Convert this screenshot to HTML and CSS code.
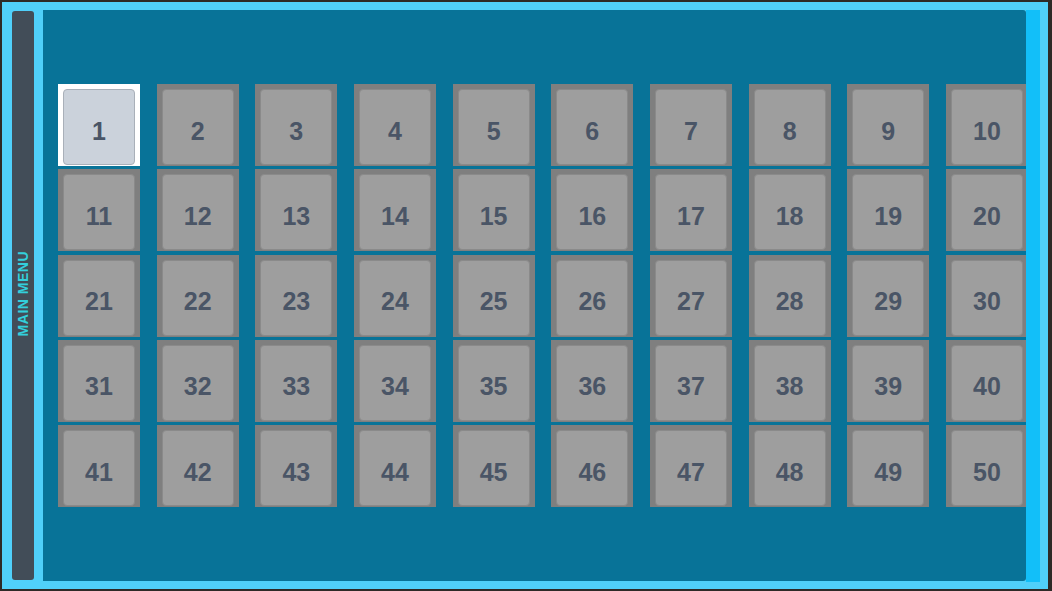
FILE: index.html
```html
<!DOCTYPE html>
<html>
<head>
<meta charset="utf-8">
<link rel="stylesheet" href="styles.css">
</head>
<body>
<div class="window">
  <div class="frame">
    <aside class="sidebar"><span class="sidebar-label">MAIN MENU</span></aside>
    <main class="panel">
      <div class="grid">
        <div class="tile selected"><div class="face">1</div></div>
        <div class="tile"><div class="face">2</div></div>
        <div class="tile"><div class="face">3</div></div>
        <div class="tile"><div class="face">4</div></div>
        <div class="tile"><div class="face">5</div></div>
        <div class="tile"><div class="face">6</div></div>
        <div class="tile"><div class="face">7</div></div>
        <div class="tile"><div class="face">8</div></div>
        <div class="tile"><div class="face">9</div></div>
        <div class="tile"><div class="face">10</div></div>
        <div class="tile"><div class="face">11</div></div>
        <div class="tile"><div class="face">12</div></div>
        <div class="tile"><div class="face">13</div></div>
        <div class="tile"><div class="face">14</div></div>
        <div class="tile"><div class="face">15</div></div>
        <div class="tile"><div class="face">16</div></div>
        <div class="tile"><div class="face">17</div></div>
        <div class="tile"><div class="face">18</div></div>
        <div class="tile"><div class="face">19</div></div>
        <div class="tile"><div class="face">20</div></div>
        <div class="tile"><div class="face">21</div></div>
        <div class="tile"><div class="face">22</div></div>
        <div class="tile"><div class="face">23</div></div>
        <div class="tile"><div class="face">24</div></div>
        <div class="tile"><div class="face">25</div></div>
        <div class="tile"><div class="face">26</div></div>
        <div class="tile"><div class="face">27</div></div>
        <div class="tile"><div class="face">28</div></div>
        <div class="tile"><div class="face">29</div></div>
        <div class="tile"><div class="face">30</div></div>
        <div class="tile"><div class="face">31</div></div>
        <div class="tile"><div class="face">32</div></div>
        <div class="tile"><div class="face">33</div></div>
        <div class="tile"><div class="face">34</div></div>
        <div class="tile"><div class="face">35</div></div>
        <div class="tile"><div class="face">36</div></div>
        <div class="tile"><div class="face">37</div></div>
        <div class="tile"><div class="face">38</div></div>
        <div class="tile"><div class="face">39</div></div>
        <div class="tile"><div class="face">40</div></div>
        <div class="tile"><div class="face">41</div></div>
        <div class="tile"><div class="face">42</div></div>
        <div class="tile"><div class="face">43</div></div>
        <div class="tile"><div class="face">44</div></div>
        <div class="tile"><div class="face">45</div></div>
        <div class="tile"><div class="face">46</div></div>
        <div class="tile"><div class="face">47</div></div>
        <div class="tile"><div class="face">48</div></div>
        <div class="tile"><div class="face">49</div></div>
        <div class="tile"><div class="face">50</div></div>
      </div>
    </main>
    <div class="scroll-strip"></div>
  </div>
</div>
</body>
</html>
```

FILE: styles.css
```css
* { box-sizing: border-box; }
html, body {
  margin: 0;
  padding: 0;
  background: #2e2a27;
  overflow: hidden;
}
.window {
  width: 1052px;
  height: 591px;
  padding: 2px 4px 2px 2px;
  background: #2e2a27;
  font-family: "Liberation Sans", Arial, sans-serif;
}
.frame {
  width: 100%;
  height: 100%;
  background: #50d0fa;
  display: flex;
  padding: 8px 8px 8px 10px;
}
.sidebar {
  width: 22px;
  flex: none;
  margin: 1px 0 1px 0;
  background: #424d58;
  border-radius: 3px;
  display: flex;
  align-items: center;
  justify-content: center;
  padding-bottom: 3px;
}
.sidebar-label {
  writing-mode: vertical-rl;
  transform: rotate(180deg);
  color: #33cfdc;
  font-weight: bold;
  font-size: 14px;
  letter-spacing: 0.5px;
  white-space: nowrap;
  line-height: 1;
}
.panel {
  margin-left: 9px;
  flex: 1;
  background: #087398;
  border-radius: 0 3px 3px 0;
  overflow: hidden;
  padding: 74px 0 0 15px;
}
.scroll-strip {
  width: 14px;
  flex: none;
  background: #12bff9;
  margin-bottom: -1px;
}
.grid {
  display: grid;
  grid-template-columns: repeat(10, 82px);
  grid-auto-rows: 82px;
  column-gap: 16.67px;
  row-gap: 3.25px;
  width: 1000px;
}
.tile {
  background: #7f7f7f;
  padding: 5px 5px 1px 5px;
}
.tile.selected {
  background: #ffffff;
}
.face {
  height: 100%;
  background: #9e9e9e;
  border: 1px solid #8a8a8a;
  border-radius: 4px;
  display: flex;
  align-items: center;
  justify-content: center;
  padding-top: 8px;
  color: #4a5566;
  font-weight: bold;
  font-size: 25px;
}
.tile.selected .face {
  background: #cbd2db;
  border-color: #a9b0b9;
}
```
